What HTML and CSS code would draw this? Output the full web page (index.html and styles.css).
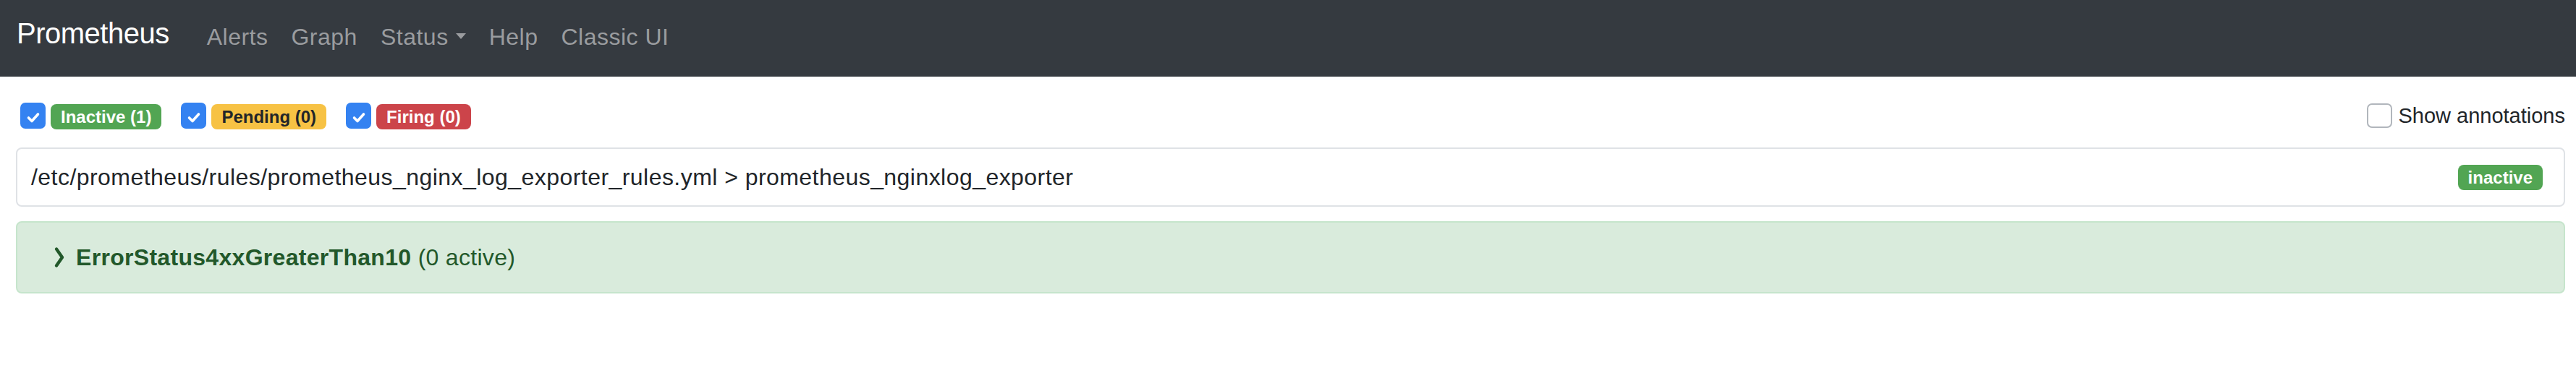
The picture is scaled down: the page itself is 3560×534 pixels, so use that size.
FILE: index.html
```html
<!DOCTYPE html>
<html lang="en">
<head>
<meta charset="utf-8">
<title>Prometheus Time Series Collection and Processing Server</title>
<link rel="stylesheet" href="styles.css">
</head>
<body>
<nav class="navbar">
  <a class="brand" href="#">Prometheus</a>
  <ul class="nav">
    <li><a class="nav-link" href="#">Alerts</a></li>
    <li><a class="nav-link" href="#">Graph</a></li>
    <li><a class="nav-link" href="#">Status<span class="caret"></span></a></li>
    <li><a class="nav-link" href="#">Help</a></li>
    <li><a class="nav-link" href="#">Classic UI</a></li>
  </ul>
</nav>
<main class="container">
  <div class="filters">
    <div class="toggles">
      <label class="toggle">
        <span class="check on"><svg viewBox="0 0 35 36" width="35" height="36"><polyline points="11.5,21 16,25.5 24.5,16" fill="none" stroke="#fff" stroke-width="3.6" stroke-linecap="round" stroke-linejoin="round"/></svg></span>
        <span class="badge success">Inactive (1)</span>
      </label>
      <label class="toggle">
        <span class="check on"><svg viewBox="0 0 35 36" width="35" height="36"><polyline points="11.5,21 16,25.5 24.5,16" fill="none" stroke="#fff" stroke-width="3.6" stroke-linecap="round" stroke-linejoin="round"/></svg></span>
        <span class="badge warning">Pending (0)</span>
      </label>
      <label class="toggle">
        <span class="check on"><svg viewBox="0 0 35 36" width="35" height="36"><polyline points="11.5,21 16,25.5 24.5,16" fill="none" stroke="#fff" stroke-width="3.6" stroke-linecap="round" stroke-linejoin="round"/></svg></span>
        <span class="badge danger">Firing (0)</span>
      </label>
    </div>
    <label class="annot">
      <span class="check off"></span>
      <span class="annot-label">Show annotations</span>
    </label>
  </div>

  <div class="group-header">
    <span class="group-title">/etc/prometheus/rules/prometheus_nginx_log_exporter_rules.yml &gt; prometheus_nginxlog_exporter</span>
    <span class="badge success">inactive</span>
  </div>

  <div class="alert">
    <svg class="chevron" viewBox="0 0 32 48" width="32" height="48"><polyline points="14,12.5 22,24 14,35.5" fill="none" stroke="#22582a" stroke-width="4.4" stroke-linecap="round" stroke-linejoin="round"/></svg>
    <strong class="alert-name">ErrorStatus4xxGreaterThan10</strong>&nbsp;<span class="alert-count">(0 active)</span>
  </div>
</main>
</body>
</html>
```

FILE: styles.css
```css
* {
  box-sizing: border-box;
}

html, body {
  margin: 0;
  padding: 0;
  background: #ffffff;
}

body {
  font-family: "Liberation Sans", Arial, Helvetica, sans-serif;
  font-size: 32px;
  line-height: 48px;
  color: #212529;
}

a {
  text-decoration: none;
}

/* Navbar */
.navbar {
  height: 106px;
  background: #353a40;
  display: flex;
  align-items: flex-start;
  padding-left: 23px;
}

.brand {
  color: #ffffff;
  font-size: 40px;
  line-height: 40px;
  margin-top: 26px;
  margin-right: 36px;
  letter-spacing: -0.5px;
}

.nav {
  list-style: none;
  margin: 35px 0 0 0;
  padding: 0;
  display: flex;
}

.nav-link {
  display: flex;
  align-items: center;
  color: #9a9c9f;
  font-size: 32px;
  line-height: 32px;
  padding: 0 16px;
  letter-spacing: 0.5px;
}

.caret {
  display: inline-block;
  width: 0;
  height: 0;
  margin-left: 10px;
  margin-top: -2px;
  border-top: 8px solid #9a9c9f;
  border-left: 7px solid transparent;
  border-right: 7px solid transparent;
}

/* Content */
.container {
  padding: 36px 15px 0 22px;
}

.filters {
  display: flex;
  justify-content: space-between;
  align-items: flex-start;
  padding-left: 6px;
  height: 37px;
}

.toggles {
  display: flex;
  gap: 27px;
}

.toggle {
  display: flex;
  align-items: flex-start;
  gap: 7px;
}

.check {
  display: block;
  width: 35px;
  height: 36px;
  border-radius: 7px;
}

.check svg {
  display: block;
}

.check.on {
  background: #3482f1;
}

.check.off {
  width: 35px;
  height: 34px;
  margin-top: 1px;
  background: #ffffff;
  border: 2px solid #b1b6bc;
}

.badge {
  display: inline-block;
  font-size: 24px;
  line-height: 24px;
  font-weight: 700;
  padding: 6px 14px 5px;
  border-radius: 8px;
  white-space: nowrap;
}

.toggle .badge {
  margin-top: 2px;
}

.badge.success {
  background: #52a553;
  color: #ffffff;
}

.badge.warning {
  background: #f7c244;
  color: #212529;
}

.badge.danger {
  background: #cc444a;
  color: #ffffff;
}

.annot {
  display: flex;
  align-items: flex-start;
  gap: 8px;
}

.annot-label {
  font-size: 29px;
  line-height: 36px;
  color: #212529;
}

.group-header {
  margin-top: 25px;
  height: 82px;
  border: 2px solid #dfe2e6;
  border-radius: 8px;
  display: flex;
  align-items: center;
  justify-content: space-between;
  padding: 0 29px 0 19px;
}

.group-title {
  letter-spacing: 0.45px;
}

.alert {
  margin-top: 20px;
  height: 100px;
  background: #d9ebdc;
  border: 2px solid #c6e5cc;
  border-radius: 8px;
  display: flex;
  align-items: center;
  padding: 0 0 0 40px;
  color: #22582a;
  letter-spacing: 0.3px;
}

.chevron {
  display: block;
  margin-right: 9px;
  flex: none;
}

.alert-name {
  font-weight: 700;
}

.alert-count {
  font-weight: 400;
}
```
